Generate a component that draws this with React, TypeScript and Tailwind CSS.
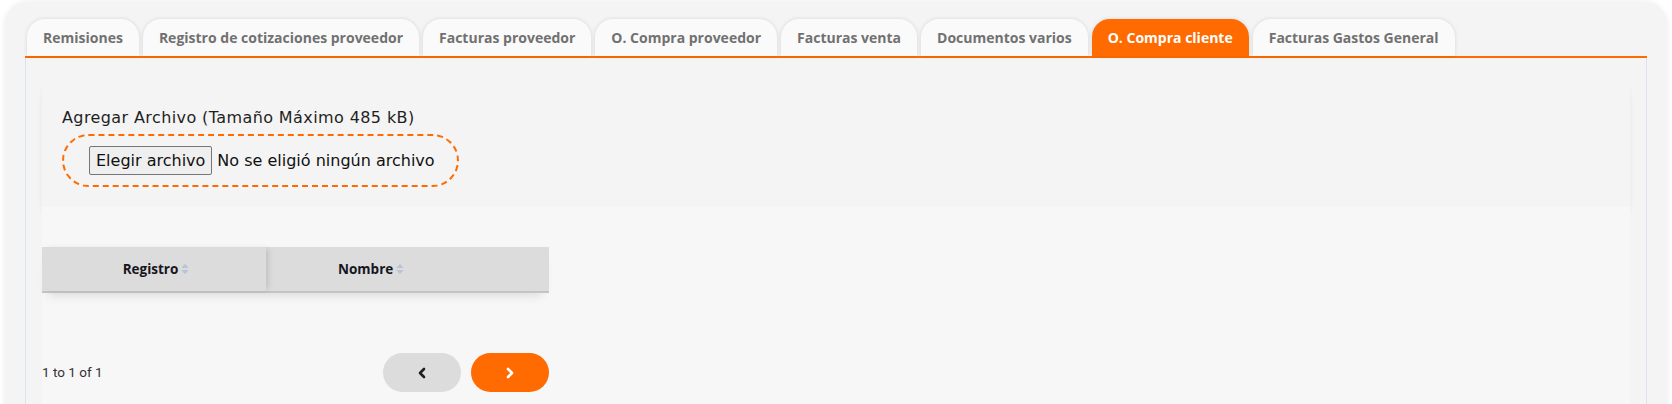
import React from "react";

const tabs = [
  "Remisiones",
  "Registro de cotizaciones proveedor",
  "Facturas proveedor",
  "O. Compra proveedor",
  "Facturas venta",
  "Documentos varios",
  "O. Compra cliente",
  "Facturas Gastos General",
];

const ACTIVE = "O. Compra cliente";

function SortIcon() {
  return (
    <svg width="8" height="12" viewBox="0 0 8 12" className="ml-[3px]">
      <path d="M4 0.8 L7.6 5 H0.4 Z" fill="#b8c3d3" />
      <path d="M4 11.2 L7.6 7 H0.4 Z" fill="#b8c3d3" />
    </svg>
  );
}

function Chevron({ dir, color }: { dir: "left" | "right"; color: string }) {
  return (
    <svg width="10" height="12" viewBox="0 0 10 12">
      <path
        d={dir === "left" ? "M7 2 L3 6 L7 10" : "M3 2 L7 6 L3 10"}
        fill="none"
        stroke={color}
        strokeWidth="2.6"
        strokeLinecap="round"
        strokeLinejoin="round"
      />
    </svg>
  );
}

export default function App() {
  return (
    <div className="w-full h-[404px] overflow-hidden bg-white pt-[2px] px-[5px]">
      <div className="h-[440px] rounded-[24px] bg-[#f4f4f4] shadow-[0_0_6px_rgba(0,0,0,0.09)] px-5 pt-[17px]">
        {/* tabs */}
        <div className="flex items-end gap-[4px] pl-[2px] font-['Open_Sans','Noto_Sans',sans-serif]">
          {tabs.map((t) => {
            const active = t === ACTIVE;
            return (
              <div
                key={t}
                className={`h-[37px] flex items-center px-[16px] rounded-t-[18px] text-[14px] font-bold shadow-[0_0_4px_rgba(0,0,0,0.12)] ${
                  active ? "bg-[#ff6b00] text-white" : "bg-[#fafafa] text-[#717171]"
                }`}
              >
                {t}
              </div>
            );
          })}
        </div>
        <div className="h-[2px] bg-[#ff6b00]" />

        {/* panel */}
        <div className="h-[400px] border-x border-[#dbe3ee] bg-[#f4f4f4] pl-4 pr-4 pt-4">
          {/* upload */}
          <div className="h-[133px] rounded-t-[20px] bg-[#f4f4f4] shadow-[0_6px_8px_-3px_rgba(0,0,0,0.13)] pl-5 pt-[34px] font-['DejaVu_Sans','Noto_Sans',sans-serif]">
            <div className="text-[16px] tracking-[0.4px] leading-[20px] text-[#1f1f1f]">
              Agregar Archivo (Tamaño Máximo 485 kB)
            </div>
            <div className="mt-[6px] w-[397px] h-[53px] rounded-[28px] border-2 border-dashed border-[#ff6b00] flex items-center pl-[25px]">
              <span className="h-[29px] px-[6px] flex items-center border border-[#767676] rounded-[2px] bg-[#efefef] text-[16px] text-[#111]">
                Elegir archivo
              </span>
              <span className="ml-[5px] text-[16px] text-[#111]">No se eligió ningún archivo</span>
            </div>
          </div>

          {/* table */}
          <div className="bg-[#f7f7f7] h-[300px] pt-10">
            <div className="w-[507px] font-['Open_Sans','Noto_Sans',sans-serif]">
              <div className="flex h-[46px] bg-[#dcdcdc] border-b-2 border-[#c4c4c4] shadow-[0_8px_10px_-6px_rgba(0,0,0,0.12)] text-[13.5px] font-bold text-[#16161e]">
                <div className="w-[224px] flex items-center justify-center pl-[4px] shadow-[4px_0_6px_-2px_rgba(0,0,0,0.14)] relative">
                  Registro
                  <SortIcon />
                </div>
                <div className="flex-1 flex items-center pl-[72px]">
                  Nombre
                  <SortIcon />
                </div>
              </div>

              <div className="mt-[60px] flex items-center justify-between">
                <span className="text-[13.5px] text-[#333] font-['Roboto','Open_Sans',sans-serif]">1 to 1 of 1</span>
                <div className="flex gap-[10px]">
                  <button className="w-[78px] h-[39px] rounded-full bg-[#dcdcdc] flex items-center justify-center">
                    <Chevron dir="left" color="#1f1f1f" />
                  </button>
                  <button className="w-[78px] h-[39px] rounded-full bg-[#ff6b00] flex items-center justify-center">
                    <Chevron dir="right" color="#ffffff" />
                  </button>
                </div>
              </div>
            </div>
          </div>
        </div>
      </div>
    </div>
  );
}
